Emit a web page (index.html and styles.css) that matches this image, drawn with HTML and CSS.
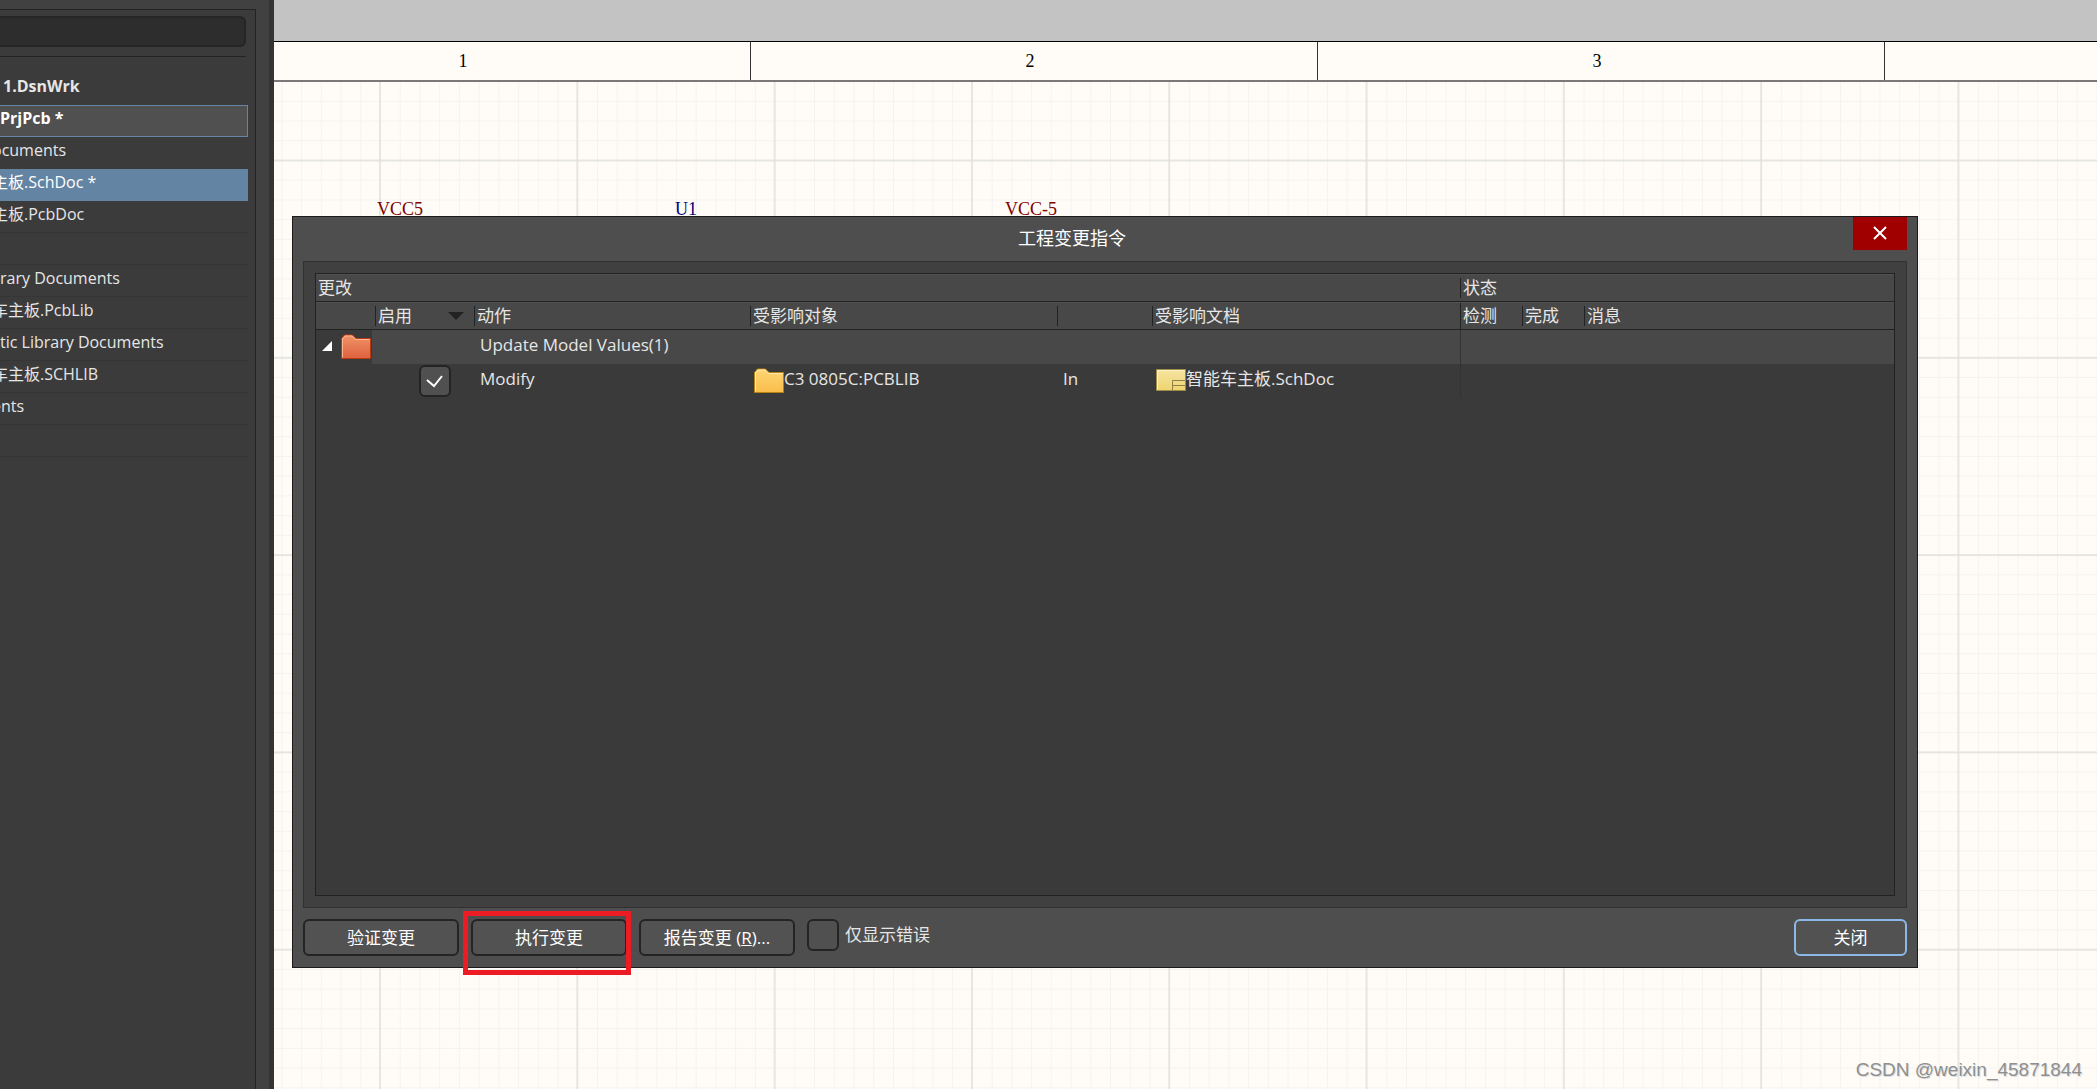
FILE: index.html
```html
<!DOCTYPE html>
<html lang="zh-CN">
<head>
<meta charset="utf-8">
<title>工程变更指令</title>
<link rel="stylesheet" href="styles.css">
</head>
<body>
<div class="app">
  <aside class="sidebar">
    <div class="panel">
      <div class="search"><input class="search-box" type="text" aria-label="Search"></div>
      <ul class="tree">
        <li class="node bold">1.DsnWrk</li>
        <li class="node bold project">PrjPcb *</li>
        <li class="node cut">ocuments</li>
        <li class="node cut selected">主板.SchDoc *</li>
        <li class="node cut lined">主板.PcbDoc</li>
        <li class="node lined"></li>
        <li class="node lined">rary Documents</li>
        <li class="node cut lined">车主板.PcbLib</li>
        <li class="node lined">tic Library Documents</li>
        <li class="node cut lined">车主板.SCHLIB</li>
        <li class="node cut lined">ents</li>
        <li class="node lined"></li>
      </ul>
    </div>
  </aside>
  <main class="workspace">
    <div class="tabs"></div>
    <div class="ruler"><span class="zone">1</span><span class="zone">2</span><span class="zone">3</span><span class="zone"></span></div>
    <div class="sheet">
      <svg class="grid" aria-hidden="true">
        <defs>
          <pattern id="minor" x="106" y="78" width="19.73" height="19.73" patternUnits="userSpaceOnUse">
            <path d="M.5 0V19.73M0 .5H19.73" stroke="#f4f3f0" fill="none"/>
          </pattern>
          <pattern id="major" x="105" y="77.5" width="197.3" height="197.3" patternUnits="userSpaceOnUse">
            <path d="M1 0V197.3M0 1H197.3" stroke="#dfdfdc" stroke-width="1.4" fill="none"/>
          </pattern>
        </defs>
        <rect width="100%" height="100%" fill="url(#minor)"/>
        <rect width="100%" height="100%" fill="url(#major)"/>
      </svg>
      <span class="net net-vcc">VCC5</span>
      <span class="net net-u1">U1</span>
      <span class="net net-neg">VCC-5</span>
    </div>
  </main>
</div>

<section class="dialog" role="dialog" aria-labelledby="title">
  <header class="titlebar">
    <h1 class="title" id="title">工程变更指令</h1>
    <button class="close" type="button" aria-label="Close">
      <svg width="14" height="14" viewBox="0 0 14 14"><path d="M1 1L13 13M13 1L1 13" stroke="#fff" stroke-width="2" fill="none"/></svg>
    </button>
  </header>
  <div class="frame">
    <div class="list">
      <table class="changes">
        <colgroup><col class="c-tree"><col class="c-on"><col class="c-act"><col class="c-obj"><col class="c-in"><col class="c-doc"><col class="c-st"><col class="c-st"><col></colgroup>
        <thead>
          <tr><th class="first" colspan="6">更改</th><th colspan="3" class="sep">状态</th></tr>
          <tr>
            <th></th>
            <th class="sep"><span class="sortable">启用<svg width="16" height="8" viewBox="0 0 16 8"><path d="M0 0H16L8 8Z" fill="#222"/></svg></span></th>
            <th class="sep">动作</th><th class="sep">受影响对象</th><th class="sep"></th><th class="sep">受影响文档</th>
            <th class="sep full">检测</th><th class="sep">完成</th><th class="sep">消息</th>
          </tr>
        </thead>
        <tbody>
          <tr class="group">
            <td class="branch"><span class="item">
              <svg width="10" height="10" viewBox="0 0 10 10"><path d="M10 0V10H0Z" fill="#fff"/></svg>
              <svg width="30" height="25" viewBox="0 0 30 25"><defs><linearGradient id="red" x2="0" y2="1"><stop stop-color="#f09468"/><stop offset="1" stop-color="#e0603e"/></linearGradient></defs><path d="M.5 24.500V4.500L3.500 1H11.500L15 4.500H29.500V24.500Z" fill="url(#red)" stroke="#b83a12"/><path d="M1.500 23.500V5L4 2H11L14.500 5.500H28.500" fill="none" stroke="#ffb690"/></svg>
            </span></td>
            <td></td><td class="act">Update Model Values(1)</td><td></td><td></td><td></td><td class="status"></td><td></td><td></td>
          </tr>
          <tr>
            <td></td>
            <td class="on"><input class="tick" type="checkbox" checked aria-label="启用"></td>
            <td class="act">Modify</td>
            <td class="file"><span class="item">
              <svg width="30" height="25" viewBox="0 0 30 25"><defs><linearGradient id="yel" x2="0" y2="1"><stop stop-color="#ffd676"/><stop offset="1" stop-color="#f9bd4a"/></linearGradient></defs><path d="M.5 24.500V4.500L3.500 1H11.500L15 4.500H29.500V24.500Z" fill="url(#yel)" stroke="#b98413"/><path d="M1.500 23.500V5L4 2H11L14.500 5.500H28.500" fill="none" stroke="#ffeaa8"/></svg><span class="name">C3 0805C:PCBLIB</span></span></td>
            <td class="in">In</td>
            <td class="file"><span class="item">
              <svg width="30" height="22" viewBox="0 0 30 22"><defs><linearGradient id="doc" x2="0" y2="1"><stop stop-color="#f5e3a2"/><stop offset="1" stop-color="#efd56f"/></linearGradient></defs><path d="M.5 .5H29.500V21.500H.5Z" fill="url(#doc)" stroke="#a08c4a"/><path d="M1.500 20.500V1.500H28.500" fill="none" stroke="#fff3c4"/><path d="M16.500 21V11.500H29M17 16.500H29" fill="none" stroke="#8f7f48"/></svg><span class="name">智能车主板.SchDoc</span></span></td>
            <td class="status"></td><td></td><td></td>
          </tr>
        </tbody>
      </table>
    </div>
  </div>
  <footer class="actions">
    <button class="btn" type="button">验证变更</button>
    <div class="marked"><button class="btn" type="button">执行变更</button></div>
    <button class="btn" type="button">报告变更 (<u>R</u>)...</button>
    <label class="errors"><input class="tick" type="checkbox">仅显示错误</label>
    <button class="btn primary" type="button">关闭</button>
  </footer>
</section>
<div class="watermark">CSDN @weixin_45871844</div>
</body>
</html>
```
FILE: styles.css
```css
* { box-sizing: border-box; }
body {
  margin: 0;
  font: 17px/24px "Open Sans", "Noto Sans CJK SC", sans-serif;
  font-weight: 400;
  color: #e6e6e6;
  background: #fffcf8;
}
svg { display: block; flex: none; }

.app { display: flex; height: 100vh; overflow: hidden; }

.sidebar {
  flex: none;
  width: 274px;
  padding: 9px 13px 0 0;
  background: #414141;
  border-right: 5px solid #343434;
}
.panel {
  height: 100%;
  padding-top: 6px;
  overflow: hidden;
  background: #3b3b3b;
  border: solid #232323;
  border-width: 1px 1px 0 0;
}
.search {
  width: 246px;
  padding-bottom: 9px;
  border-bottom: 1px solid #232323;
}
.search-box {
  display: block;
  width: 100%;
  height: 31px;
  padding: 0 8px;
  color: inherit;
  font: inherit;
  background: #2d2d2d;
  border: 2px solid #252525;
  border-left: 0;
  border-radius: 0 6px 6px 0;
}
.tree { width: 248px; margin: 16px 0 0; padding: 0; list-style: none; font-size: 16px; }
.node {
  height: 32px;
  line-height: 26px;
  white-space: nowrap;
  overflow: hidden;
  border-bottom: 1px solid transparent;
}
.bold { font-weight: 700; padding-left: 3px; }
.cut { text-indent: -8px; }
.lined { border-color: #353535; }
.project {
  padding-left: 0;
  line-height: 24px;
  color: #fff;
  background: #505050;
  border: 1px solid #6386a7;
  border-left: 0;
}
.selected { color: #fff; background: #6384a3; }

.workspace { flex: 1; min-width: 0; display: flex; flex-direction: column; overflow: hidden; }
.tabs { height: 42px; background: #c3c3c3; border-bottom: 1px solid #000; }
.ruler {
  display: grid;
  grid-template-columns: 567px 567px 567px 567px;
  height: 40px;
  margin-left: -90px;
  border-bottom: 2px solid #7b7878;
  font: 18px/38px "Liberation Serif", serif;
  color: #000;
}
.zone { padding-right: 8px; text-align: center; border-right: 1px solid #333; }
.sheet {
  position: relative;
  flex: 1;
  font: 18px/20px "Liberation Serif", serif;
  color: #800000;
}
.grid { width: 100%; height: 100%; }
.net { position: absolute; top: 117px; }
.net-vcc { left: 103px; }
.net-u1 { left: 401px; color: #000080; }
.net-neg { left: 731px; }

.dialog {
  position: absolute;
  top: 216px;
  right: 179px;
  bottom: 121px;
  left: 292px;
  display: flex;
  flex-direction: column;
  padding: 0 10px 11px;
  background: #4e4e4e;
  border: 1px solid #1b1b1b;
}
.titlebar { display: grid; grid-template-columns: 1fr 54px; height: 44px; }
.title {
  margin: 0;
  padding-right: 12px;
  font-size: 18px;
  line-height: 42px;
  font-weight: 400;
  text-align: center;
  color: #fff;
}
.close {
  display: grid;
  place-items: center;
  height: 33px;
  padding: 0 0 2px;
  background: #a00000;
  border: 0;
}
.frame {
  flex: 1;
  display: flex;
  padding: 11px;
  background: #404040;
  border: 1px solid #313131;
}
.list { flex: 1; background: #3a3a3a; border: 1px solid #222; }

.changes { width: 100%; table-layout: fixed; border-collapse: separate; border-spacing: 0; }
.c-tree { width: 59px; }
.c-on { width: 99px; }
.c-act { width: 276px; }
.c-obj { width: 307px; }
.c-in { width: 95px; }
.c-doc { width: 308px; }
.c-st { width: 62px; }
.changes th {
  height: 28px;
  padding: 0 0 0 3px;
  font-weight: 400;
  text-align: left;
  white-space: nowrap;
  background-color: #484848;
  border-bottom: 1px solid #222;
  border-top: 1px solid #505050;
}
.changes .first { padding-left: 2px; }
.changes .sep {
  background-image: linear-gradient(#222, #222);
  background-size: 1px 20px;
  background-position: 0 3px;
  background-repeat: no-repeat;
}
.changes .full { background-size: 1px 28px; background-position: 0 0; }
.sortable { display: flex; align-items: center; justify-content: space-between; padding-right: 10px; }
.changes td { height: 34px; padding: 0 0 0 4px; white-space: nowrap; }
.group td { background: #484848; }
.group .branch { padding: 0 0 2px 6px; background: linear-gradient(to right, #3a3a3a 56px, #484848 56px); }
.branch .item { gap: 9px; }
.changes .act { padding: 0 0 4px 6px; }
.changes .in { padding: 0 0 4px 6px; }
.changes .on { padding-left: 44px; }
.changes .file { padding-bottom: 2px; }
.changes .status { border-left: 1px solid #333; }
.item { display: flex; align-items: center; }
.name { padding-bottom: 2px; }

.tick {
  appearance: none;
  display: block;
  flex: none;
  width: 32px;
  height: 32px;
  margin: 0;
  background: #505050;
  border: 2px solid #242424;
  border-radius: 6px;
}
.tick:checked {
  background: #505050 url("data:image/svg+xml,%3Csvg xmlns='http://www.w3.org/2000/svg' width='18' height='14'%3E%3Cpath d='M1 6L8 12L16 2' fill='none' stroke='white' stroke-width='2'/%3E%3C/svg%3E") center no-repeat;
}

.actions { display: flex; align-items: flex-start; gap: 12px; padding-top: 11px; }
.btn {
  width: 156px;
  height: 37px;
  padding: 0;
  font: inherit;
  color: #fff;
  background: #525252;
  border: 2px solid #242424;
  border-radius: 6px;
}
.marked { position: relative; }
.marked::after {
  content: "";
  position: absolute;
  inset: -8px -4px -19px -8px;
  border: 5px solid #ed1c24;
}
.errors { display: flex; align-items: center; gap: 6px; }
.primary { width: 113px; margin-left: auto; border-color: #8cb8e8; }

.watermark {
  position: absolute;
  right: 15px;
  bottom: 6px;
  font: 19px/26px "Liberation Sans", sans-serif;
  color: #8f8f8f;
  text-shadow: 1px 1px 0 #dcdcdc;
}
```
